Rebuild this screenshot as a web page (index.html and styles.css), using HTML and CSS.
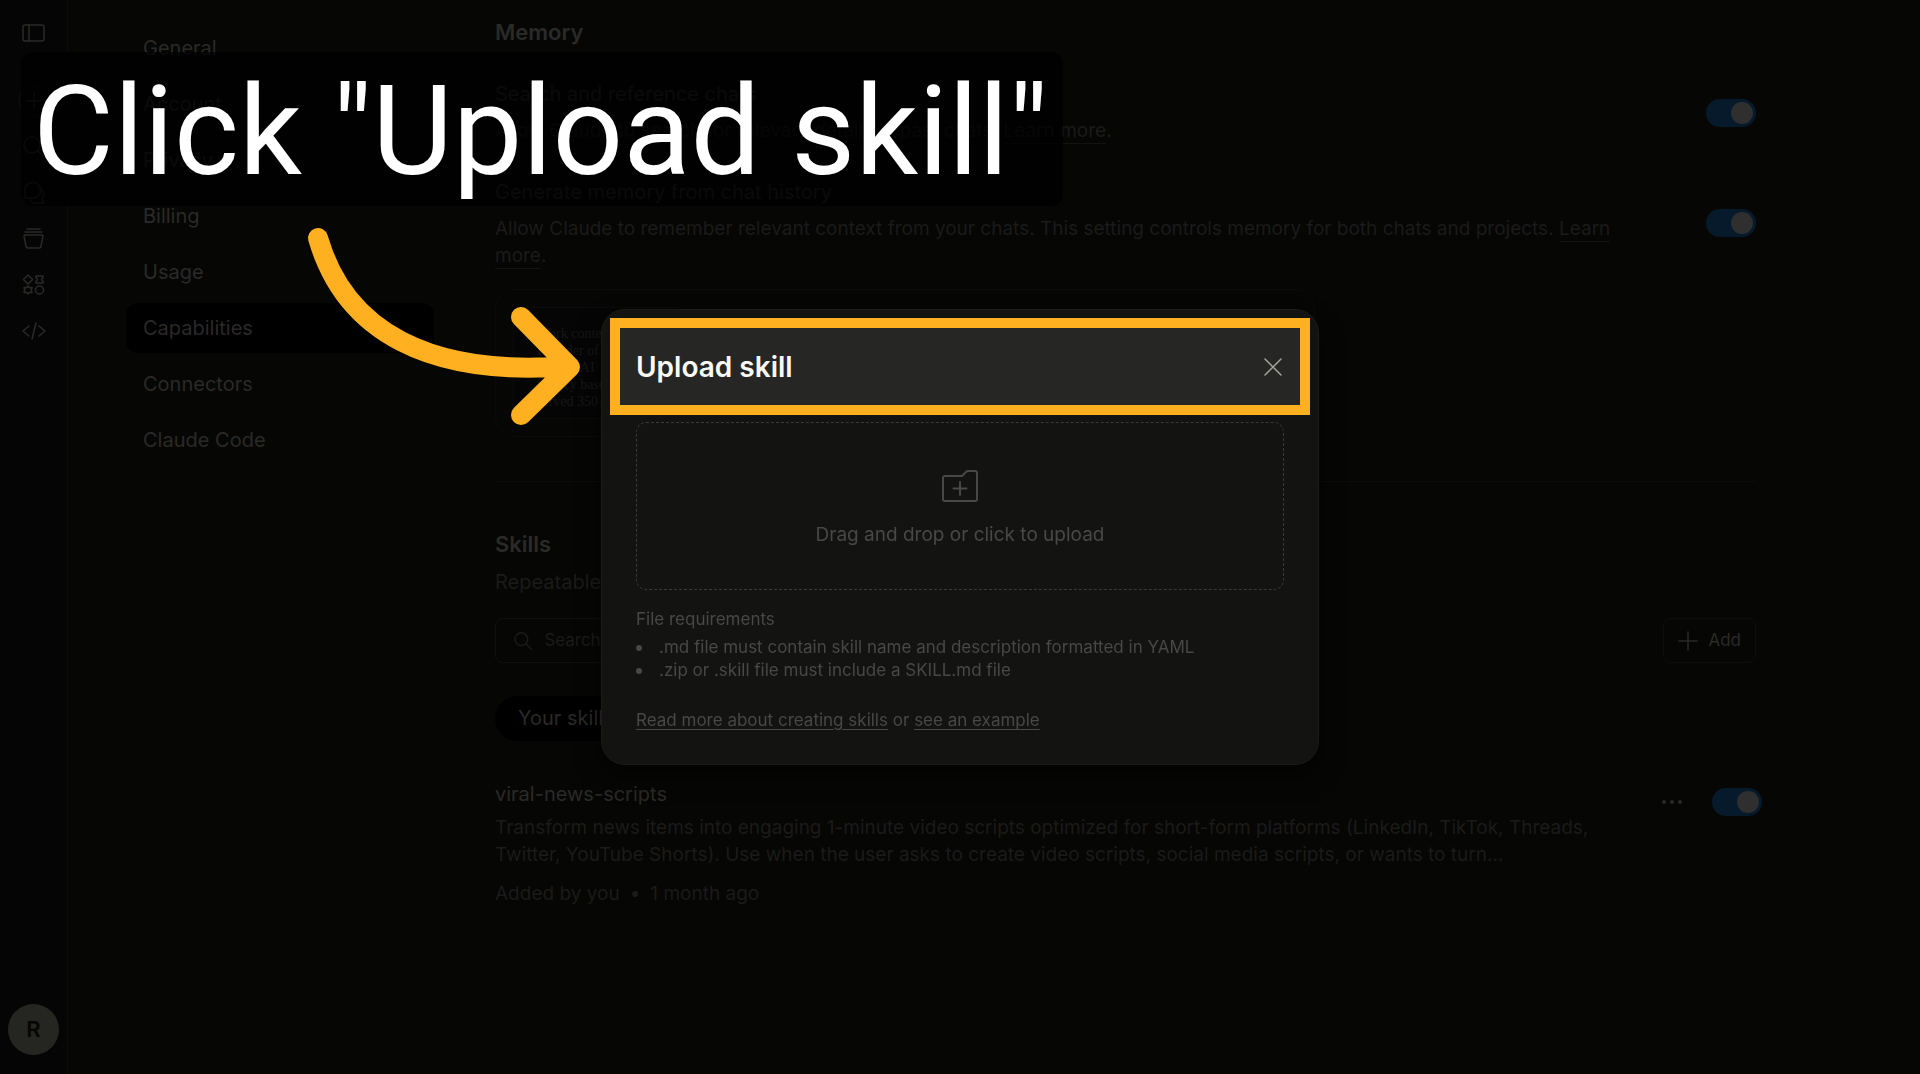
FILE: index.html
```html
<!DOCTYPE html>
<html lang="en">
<head>
    <meta charset="UTF-8">
    <meta name="viewport" content="width=device-width, initial-scale=1.0">
    <title>Upload skill</title>
    <link rel="stylesheet" href="styles.css">
</head>
<body>
    <div class="app">
        <aside class="rail">
            <button class="rail-btn rail-toggle" aria-label="Toggle sidebar">
                <svg width="24" height="24" viewBox="0 0 24 24"><rect x="1" y="4" width="21" height="16" rx="2"/><path d="M7 4v16"/></svg>
            </button>
            <button class="rail-btn rail-new" aria-label="New chat">
                <svg width="34" height="34" viewBox="0 0 34 34"><circle cx="17" cy="17" r="15"/><path d="M17 9v16M9 17h16"/></svg>
            </button>
            <button class="rail-btn" aria-label="Search">
                <svg width="24" height="24" viewBox="0 0 24 24"><circle cx="10" cy="10" r="8"/><path d="M16 16l7 7"/></svg>
            </button>
            <button class="rail-btn" aria-label="Chats">
                <svg width="24" height="24" viewBox="0 0 24 24"><path d="M2 17l2-3a8 8 0 1 1 4 3zM20 9c2 3 2 6 0 9l2 4h-8c-3 0-5-1-6-3"/></svg>
            </button>
            <button class="rail-btn" aria-label="Projects">
                <svg width="24" height="24" viewBox="0 0 24 24"><path d="M5 2h13M3 5h17M3 8h17a1 1 0 0 1 1 1l-2 10a2 2 0 0 1-2 2H6a2 2 0 0 1-2-2L2 9a1 1 0 0 1 1-1z"/></svg>
            </button>
            <button class="rail-btn" aria-label="Artifacts">
                <svg width="24" height="24" viewBox="0 0 24 24"><path d="M6 2l4.500 4.500L6 11 1.500 6.500zM14 3h7v1.500l-1.500 2 1.500 2V10h-7V8.500l1.500-2-1.500-2zM6 13l1.500 1.700 2.500-.2-.7 2.500.7 2.500-2.500-.2L6 21l-1.500-1.700-2.500.2.700-2.500-.7-2.500 2.500.2z"/><circle cx="17.500" cy="17" r="4"/></svg>
            </button>
            <button class="rail-btn" aria-label="Code">
                <svg width="24" height="24" viewBox="0 0 24 24"><path d="M7 7l-6 5 6 5M17 7l6 5-6 5M14 4l-4 16"/></svg>
            </button>
            <button class="avatar" aria-label="Account menu">R</button>
        </aside>

        <main class="settings">
            <nav class="settings-nav">
                <a href="#">General</a>
                <a href="#">Account</a>
                <a href="#">Privacy</a>
                <a href="#">Billing</a>
                <a href="#">Usage</a>
                <a href="#" class="active">Capabilities</a>
                <a href="#">Connectors</a>
                <a href="#">Claude Code</a>
            </nav>

            <div class="content">
                <section class="memory">
                    <h2>Memory</h2>
                    <div class="setting">
                        <div class="setting-text">
                            <label for="searchChats">Search and reference chats</label>
                            <p>Allow Claude to search for relevant details in past chats. <a href="#">Learn more</a>.</p>
                        </div>
                        <input type="checkbox" class="switch" id="searchChats" checked>
                    </div>
                    <div class="setting">
                        <div class="setting-text">
                            <label for="generateMemory">Generate memory from chat history</label>
                            <p>Allow Claude to remember relevant context from your chats. This setting controls memory for both chats and projects. <a href="#">Learn more</a>.</p>
                        </div>
                        <input type="checkbox" class="switch" id="generateMemory" checked>
                    </div>
                    <div class="memory-card">
                        <div class="memory-preview">
                            Work context<br>Founder of Fu<br>Run an AI<br>agency based<br>served 350+
                        </div>
                    </div>
                </section>

                <section class="skills">
                    <h2>Skills</h2>
                    <p class="skills-intro">Repeatable, customizable instructions that Claude can follow.</p>
                    <div class="toolbar">
                        <div class="search">
                            <svg width="20" height="20" viewBox="0 0 20 20"><circle cx="8" cy="8" r="7"/><path d="M13 13l6 6"/></svg>
                            <input type="text" placeholder="Search" aria-label="Search skills">
                        </div>
                        <button class="add-btn">
                            <svg width="20" height="20" viewBox="0 0 20 20"><path d="M10 1v18M1 10h18"/></svg>
                            Add
                        </button>
                    </div>
                    <button class="pill">Your skills</button>

                    <div class="skill">
                        <div class="skill-text">
                            <label for="viralNews">viral-news-scripts</label>
                            <p>Transform news items into engaging 1-minute video scripts optimized for short-form platforms (LinkedIn, TikTok, Threads, Twitter, YouTube Shorts). Use when the user asks to create video scripts, social media scripts, or wants to turn…</p>
                            <p class="skill-meta">Added by you<span>•</span>1 month ago</p>
                        </div>
                        <div class="skill-actions">
                            <button class="more-btn" aria-label="More options">
                                <svg width="22" height="6" viewBox="0 0 22 6"><circle cx="3" cy="3" r="2"/><circle cx="11" cy="3" r="2"/><circle cx="19" cy="3" r="2"/></svg>
                            </button>
                            <input type="checkbox" class="switch" id="viralNews" checked>
                        </div>
                    </div>
                </section>
            </div>
        </main>
    </div>

    <div class="overlay">
        <div class="modal" role="dialog" aria-labelledby="modalTitle">
            <!-- highlighted header -->
            <header class="modal-header">
                <h1 id="modalTitle">Upload skill</h1>
                <button class="close-btn" aria-label="Close">
                    <svg width="20" height="20" viewBox="0 0 20 20"><path d="M2 2l16 16M18 2L2 18"/></svg>
                </button>
            </header>
            <div class="modal-body">
                <button class="dropzone">
                    <svg width="38" height="34" viewBox="0 0 38 34"><path d="M4 7h17l4-4c1-1 1-1 2-1h7a2 2 0 0 1 2 2v26a2 2 0 0 1-2 2H4a2 2 0 0 1-2-2V9a2 2 0 0 1 2-2zM19 13v13M12.500 19.500h13"/></svg>
                    Drag and drop or click to upload
                </button>
                <h3>File requirements</h3>
                <ul>
                    <li>.md file must contain skill name and description formatted in YAML</li>
                    <li>.zip or .skill file must include a SKILL.md file</li>
                </ul>
                <p><a href="#">Read more about creating skills</a> or <a href="#">see an example</a></p>
            </div>
        </div>
    </div>

    <!-- tutorial annotations -->
    <div class="caption">Click "Upload skill"</div>
    <svg class="arrow" width="290" height="210" viewBox="300 220 290 210">
        <path d="M318 238C345 332 430 377 568 366M521 317L570 367L521 415"/>
    </svg>
</body>
</html>
```
FILE: styles.css
```css
* {
    box-sizing: border-box;
}
body {
    margin: 0;
    font-family: Inter, "Liberation Sans", sans-serif;
    font-size: 20px;
    line-height: 27px;
    color: #2a2a28; /* dimmed text */
    background-color: #060604;
}
h1, h2, h3, p, ul {
    margin: 0;
    padding: 0;
}
h2 {
    font-size: 22px;
    line-height: 28px;
    font-weight: 600;
}
a {
    color: inherit;
}
button {
    padding: 0;
    border: none;
    background: none;
    color: inherit;
    font: inherit;
    cursor: pointer;
}
svg {
    fill: none;
    stroke: currentColor;
    stroke-width: 1.500;
    stroke-linecap: round;
    stroke-linejoin: round;
}
.app {
    display: flex;
    min-height: 100vh;
}

/* Left rail */
.rail {
    display: flex;
    flex-direction: column;
    align-items: center;
    width: 68px;
    padding: 10px 0 19px;
    border-right: 1px solid #0b0b0a;
    background-color: #050505;
}
.rail-btn {
    display: flex;
    align-items: center;
    justify-content: center;
    width: 46px;
    height: 46px;
}
.rail-toggle {
    margin-bottom: 22px;
}
.rail-new circle {
    stroke: #0e0e0d;
}
.avatar {
    width: 51px;
    height: 51px;
    margin-top: auto;
    border-radius: 50%;
    background-color: #252522;
    color: #060604;
    font-size: 22px;
    font-weight: 600;
}

/* Settings page */
.settings {
    flex: 1;
    display: grid;
    grid-template-columns: 308px 1fr;
    gap: 61px;
    padding: 0 164px 0 58px;
}
.settings-nav {
    display: flex;
    flex-direction: column;
    gap: 6px;
    padding-top: 23px;
}
.settings-nav a {
    padding: 0 17px;
    border-radius: 12px;
    line-height: 50px;
    text-decoration: none;
}
.settings-nav .active {
    background-color: #000;
}
.content {
    padding-top: 18px;
}
.content p {
    color: #1b1b1a;
    font-size: 19px;
}
.setting {
    display: flex;
    align-items: center;
    justify-content: space-between;
    gap: 60px;
    margin-top: 35px;
}
.setting + .setting {
    align-items: flex-start;
}
.setting + .setting .switch {
    margin-top: 30px;
}
.setting-text p {
    margin-top: 9px;
}
.setting a {
    text-decoration-color: #121211;
    text-underline-offset: 6px;
}
.switch {
    appearance: none;
    flex: none;
    width: 50px;
    height: 28px;
    margin: 0;
    padding: 3px;
    border-radius: 14px;
    background-color: #071a2c;
}
.switch::before {
    content: "";
    display: block;
    width: 22px;
    height: 22px;
    margin-left: auto;
    border-radius: 50%;
    background-color: #2f2f2f;
}
.memory-card {
    width: 820px;
    margin-top: 20px;
    padding: 17px;
    border: 1px solid #0b0b0a;
    border-radius: 20px;
}
.memory-preview {
    width: 172px;
    height: 112px;
    padding: 17px 23px;
    border: 1px solid #0b0b0b;
    border-radius: 8px;
    background-color: #050506;
    color: #171716;
    font-family: "Liberation Serif", serif;
    font-size: 14px;
    line-height: 17px;
    white-space: nowrap;
}
.skills {
    margin-top: 44px;
    padding-top: 48px;
    border-top: 1px solid #0b0b0a;
}
.content .skills-intro {
    margin-top: 11px;
    font-size: 20px;
}
.toolbar {
    display: flex;
    justify-content: space-between;
    margin-top: 22px;
}
.search {
    display: flex;
    align-items: center;
    gap: 12px;
    width: 380px;
    height: 45px;
    padding: 0 18px;
    border: 1px solid #10100f;
    border-radius: 8px;
    color: #1b1b1a;
}
.search input {
    width: 100%;
    padding: 0;
    border: none;
    outline: none;
    background: none;
    color: inherit;
    font: inherit;
    font-size: 17px;
}
.search input::placeholder {
    color: #1b1b1a;
}
.add-btn {
    display: flex;
    align-items: center;
    gap: 10px;
    padding: 0 14px;
    border: 1px solid #0e0e0d;
    border-radius: 8px;
    font-size: 17px;
}
.pill {
    height: 45px;
    margin-top: 33px;
    padding: 0 23px;
    border-radius: 23px;
    background-color: #000;
}
.skill {
    display: flex;
    justify-content: space-between;
    margin: 40px -6px 0 0;
}
.skill-text {
    max-width: 1130px;
}
.skill-text p {
    margin-top: 6px;
}
.skill-text .skill-meta {
    margin-top: 12px;
}
.skill-meta span {
    margin: 0 10px;
}
.skill-actions {
    display: flex;
    gap: 29px;
    margin-top: 7px;
}
.more-btn {
    display: flex;
    align-items: center;
    height: 28px;
}
.more-btn svg {
    fill: currentColor;
    stroke: none;
}

/* Upload dialog */
.overlay {
    position: fixed;
    inset: 0;
    display: flex;
    align-items: center;
    justify-content: center;
}
.modal {
    width: 718px;
    padding: 8px;
    border: 1px solid #1b1b19;
    border-radius: 24px;
    background-color: #131311;
    box-shadow: 0 12px 24px rgba(0, 0, 0, 0.5);
    color: #484846;
}
.modal-header {
    display: flex;
    align-items: center;
    justify-content: space-between;
    height: 97px;
    padding: 0 17px 0 16px;
    border: 10px solid #ffb020;
    background-color: #262624;
}
.modal-header h1 {
    color: #faf9f5;
    font-size: 28px;
    line-height: 36px;
    font-weight: 600;
}
.close-btn {
    display: flex;
    color: #a5a49c;
}
.modal-body {
    padding: 7px 26px 24px;
    font-size: 17px;
    line-height: 23px;
}
.dropzone {
    display: flex;
    flex-direction: column;
    align-items: center;
    justify-content: center;
    gap: 18px;
    width: 100%;
    height: 168px;
    padding-top: 4px;
    border: 1px dashed #3a3a38;
    border-radius: 10px;
    font-size: 19px;
    line-height: 27px;
}
.dropzone svg {
    stroke-width: 2;
}
.modal-body h3 {
    margin-top: 18px;
    font-size: 17px;
    font-weight: 400;
}
.modal-body ul {
    margin-top: 5px;
    list-style: none;
}
.modal-body li {
    display: flex;
    align-items: center;
    gap: 17px;
}
.modal-body li::before {
    content: "";
    width: 6px;
    height: 6px;
    border-radius: 50%;
    background-color: currentColor;
}
.modal-body p {
    margin-top: 27px;
}
.modal-body a {
    text-underline-offset: 3px;
}

/* Tutorial annotations, drawn over the page */
.caption {
    position: absolute;
    top: 52px;
    left: 21px;
    padding: 6px 15px 0 12px;
    border-radius: 12px;
    background-color: rgba(0, 0, 0, 0.75);
    color: #fff;
    font-family: Roboto, "Liberation Sans", sans-serif;
    font-size: 124px;
    line-height: 148px;
    white-space: nowrap;
}
.arrow {
    position: absolute;
    top: 220px;
    left: 300px;
    stroke: #ffb020;
    stroke-width: 20;
}
```
